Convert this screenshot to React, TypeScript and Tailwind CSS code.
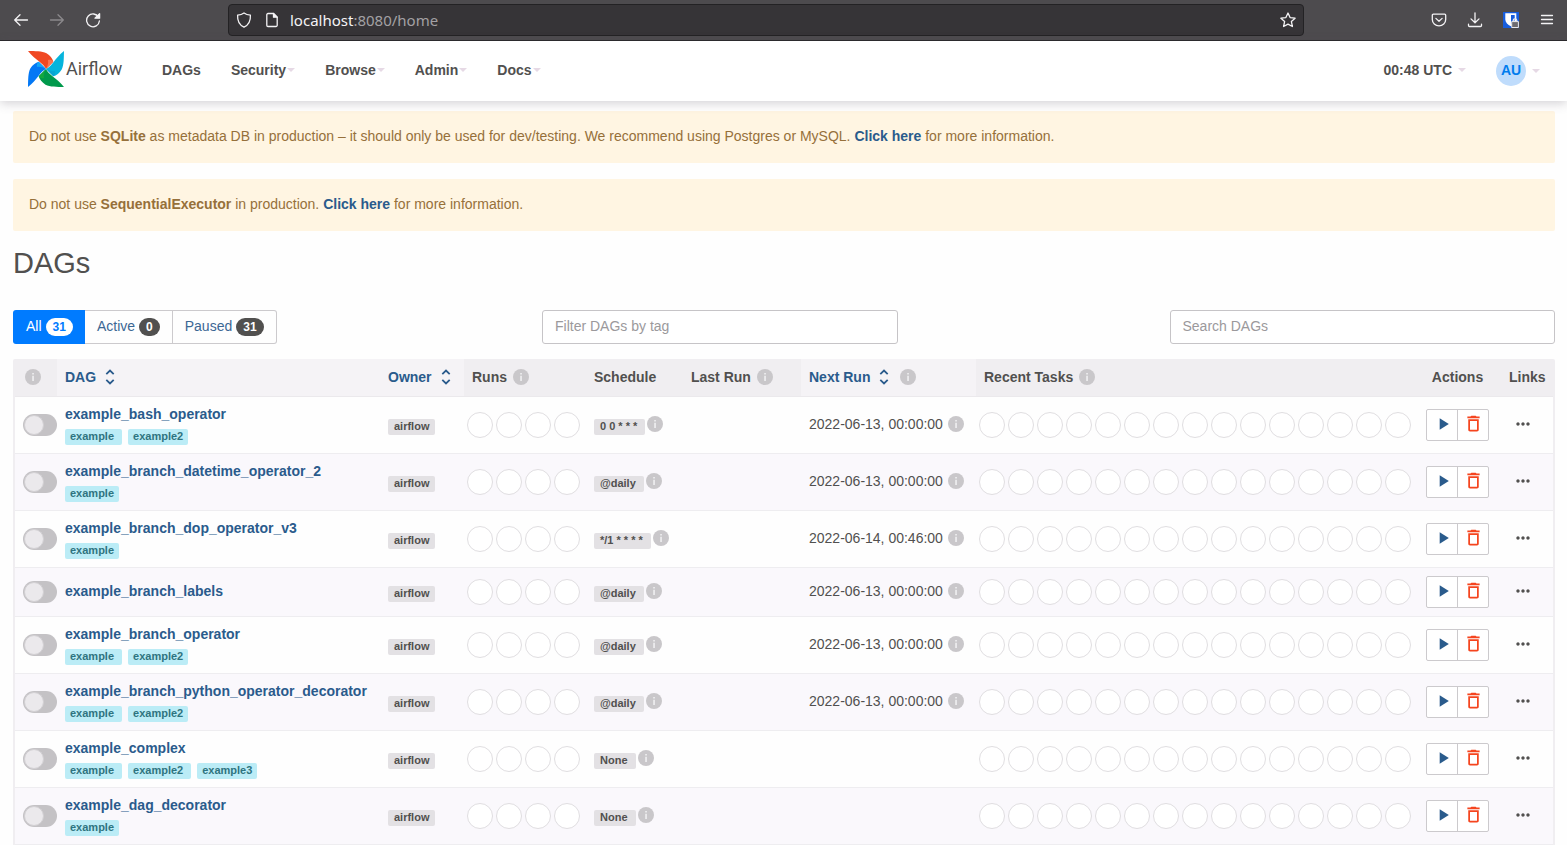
import type { ReactNode } from "react";
import { MdDeleteOutline, MdMoreHoriz, MdPlayArrow } from "react-icons/md";

type Dag = {
  id: string;
  tags: string[];
  schedule: string;
  nextRun?: string;
};

const dags: Dag[] = [
  {
    id: "example_bash_operator",
    tags: ["example", "example2"],
    schedule: "0 0 * * *",
    nextRun: "2022-06-13, 00:00:00",
  },
  {
    id: "example_branch_datetime_operator_2",
    tags: ["example"],
    schedule: "@daily",
    nextRun: "2022-06-13, 00:00:00",
  },
  {
    id: "example_branch_dop_operator_v3",
    tags: ["example"],
    schedule: "*/1 * * * *",
    nextRun: "2022-06-14, 00:46:00",
  },
  {
    id: "example_branch_labels",
    tags: [],
    schedule: "@daily",
    nextRun: "2022-06-13, 00:00:00",
  },
  {
    id: "example_branch_operator",
    tags: ["example", "example2"],
    schedule: "@daily",
    nextRun: "2022-06-13, 00:00:00",
  },
  {
    id: "example_branch_python_operator_decorator",
    tags: ["example", "example2"],
    schedule: "@daily",
    nextRun: "2022-06-13, 00:00:00",
  },
  {
    id: "example_complex",
    tags: ["example", "example2", "example3"],
    schedule: "None",
  },
  {
    id: "example_dag_decorator",
    tags: ["example"],
    schedule: "None",
  },
];

function ToolIcon({ children }: { children: ReactNode }) {
  return (
    <svg
      className="size-4"
      viewBox="0 0 16 16"
      fill="none"
      stroke="currentColor"
      strokeWidth="1.3"
      strokeLinecap="round"
      strokeLinejoin="round"
    >
      {children}
    </svg>
  );
}

function BrowserBar() {
  return (
    <div className="flex h-[41px] items-center border-b border-[#29282a] bg-[#4d4b4e] text-[#f4f3f5]">
      <div className="flex w-[228px] shrink-0 items-center gap-5 pl-[13px]">
        <button aria-label="Back">
          <ToolIcon>
            <path d="M14.5 8H1.7M7 2.7 1.7 8 7 13.3" />
          </ToolIcon>
        </button>
        <button aria-label="Forward" className="text-[#8b898c]">
          <ToolIcon>
            <path d="M1.5 8h12.8M9 2.7 14.3 8 9 13.3" />
          </ToolIcon>
        </button>
        <button aria-label="Reload">
          <ToolIcon>
            <path d="M13.6 5.2A6.4 6.4 0 1 0 14.4 9" />
            <path d="M14.6 1.6v4.6h-4.6z" fill="currentColor" />
          </ToolIcon>
        </button>
      </div>
      <div className="flex h-8 flex-1 items-center rounded-sm border border-[#232224] bg-[#363437] px-[7px]">
        <ToolIcon>
          <path d="M8 .9c2 1.5 4 2 6.4 2.2.3 5.4-1.5 9.8-6.4 12C3.100 12.900 1.300 8.500 1.600 3.100 4 2.900 6 2.400 8 .9z" />
        </ToolIcon>
        <span className="ml-3">
          <ToolIcon>
            <path d="M9.500 1.500H4A1.200 1.200 0 0 0 2.800 2.700v10.600A1.200 1.200 0 0 0 4 14.500h8a1.200 1.200 0 0 0 1.200-1.200V5.200z" />
            <path d="M9.500 1.500v3.700h3.700z" fill="currentColor" />
          </ToolIcon>
        </span>
        <span className="ml-[10px] flex-1 font-['Noto_Sans',sans-serif] text-[15px] leading-5 text-[#a3a1a4]">
          <span className="text-[#f4f3f5]">localhost</span>:8080/home
        </span>
        <button aria-label="Bookmark this page">
          <ToolIcon>
            <path d="m8 1 2.100 4.600 5 .6-3.700 3.400 1 4.900L8 12.100l-4.400 2.400 1-4.900L.9 6.200l5-.6z" />
          </ToolIcon>
        </button>
      </div>
      <div className="flex w-[263px] shrink-0 items-center justify-end gap-5 pr-3">
        <button aria-label="Save to Pocket">
          <ToolIcon>
            <path d="M2.300 2.200h11.400a1 1 0 0 1 1 1V7.500a6.700 6.300 0 0 1-13.400 0V3.200a1 1 0 0 1 1-1z" />
            <path d="M4.900 6.400 8 9.300l3.100-2.900" />
          </ToolIcon>
        </button>
        <button aria-label="Downloads">
          <ToolIcon>
            <path d="M8 .8v9.800M4 6.900l4 3.900 4-3.900M1.500 12.200v1.300a1 1 0 0 0 1 1h11a1 1 0 0 0 1-1v-1.300" />
          </ToolIcon>
        </button>
        <button aria-label="Password manager">
          <svg className="size-4" viewBox="0 0 16 16">
            <path d="M0 0h16v16H0z" fill="#175ddc" />
            <path
              d="M2.300 1.300h11v6.200c0 3-2.600 5.200-5.500 6.800-2.900-1.600-5.500-3.800-5.500-6.800z"
              fill="#fff"
            />
            <path d="M8 3h3.700v4.700c0 1.700-1.700 3.200-3.700 4.300z" fill="#175ddc" />
            <path
              d="M10.200 10V8.600a1.800 1.800 0 0 1 3.600 0V10"
              fill="none"
              stroke="#e9e8ea"
              strokeWidth="1.300"
            />
            <path d="M8.700 9.600h6.700v5.900H8.700z" fill="#6d6b6e" stroke="#e9e8ea" />
          </svg>
        </button>
        <button aria-label="Open menu">
          <ToolIcon>
            <path d="M2.500 3.500h11M2.500 7.500h11M2.500 11.500h11" />
          </ToolIcon>
        </button>
      </div>
    </div>
  );
}

function Pinwheel() {
  return (
    <svg className="size-9" viewBox="0 0 36 36">
      <path d="M0 0C7 .2 14 0 18.500 2.300 22 4.500 24.500 7.500 25.300 10.700L18 18C15.500 12 7.500 9.500 0 0z" fill="#f04822" />
      <path d="M20 9c2-.5 4-.3 5.300 1.700L18 18c1.800-3 2.500-6 2-9z" fill="#fb7552" />
      <path d="M36 0c-.2 7 0 14-2.300 18.500-2.200 3.500-5.200 6-8.400 6.800L18 18C24 15.500 26.500 7.500 36 0z" fill="#06b4dc" />
      <path d="M27 20c.5 2 .3 4-1.700 5.300L18 18c3 1.800 6 2.500 9 2z" fill="#0aa6d2" />
      <path d="M36 36c-7-.2-14 0-18.500-2.300-3.500-2.200-6-5.200-6.800-8.400L18 18C20.500 24 28.500 26.500 36 36z" fill="#00994b" />
      <path d="M16 27c-2 .5-4 .3-5.300-1.700L18 18c-1.800 3-2.500 6-2 9z" fill="#12a83f" />
      <path d="M0 36c.2-7 0-14 2.300-18.500 2.200-3.500 5.200-6 8.400-6.800L18 18C12 20.500 9.500 28.500 0 36z" fill="#0378f5" />
      <path d="M9 16c-.5-2-.3-4 1.700-5.300L18 18c-3-1.800-6-2.500-9-2z" fill="#12a6f7" />
    </svg>
  );
}

function Caret() {
  return (
    <span className="inline-block border-x-4 border-t-4 border-x-transparent border-t-[#e6d9e5]" />
  );
}

function NavItem({ label }: { label: string }) {
  return (
    <button className="flex items-center gap-px px-[15px]">
      {label}
      <Caret />
    </button>
  );
}

function Navbar() {
  return (
    <nav className="relative flex h-[60px] items-center bg-white pr-[27px] pl-7 text-sm leading-5 font-bold shadow-[0_2px_10px_rgba(80,75,90,0.26)]">
      <a href="#home" className="flex items-center gap-[2px] pb-1">
        <Pinwheel />
        <span className="w-[69px] font-['Roboto',sans-serif] text-[18px] font-normal">
          Airflow
        </span>
      </a>
      <div className="ml-3 flex flex-1 pb-[2px]">
        <a href="#dags" className="px-[15px]">
          DAGs
        </a>
        <NavItem label="Security" />
        <NavItem label="Browse" />
        <NavItem label="Admin" />
        <NavItem label="Docs" />
      </div>
      <button className="flex items-center gap-[6px] pb-[2px]">
        00:48 UTC
        <Caret />
      </button>
      <button className="ml-[30px] flex items-center gap-[6px]">
        <span className="flex size-[30px] items-center justify-center rounded-full bg-[#bfdcfc] pb-[2px] text-[#017cee]">
          AU
        </span>
        <Caret />
      </button>
    </nav>
  );
}

function Alert({ children }: { children: ReactNode }) {
  return (
    <div className="mb-4 rounded-xs bg-[#fff5e2] px-4 pt-[15px] pb-[17px] leading-5 text-[#96703a]">
      {children}
    </div>
  );
}

function DocLink() {
  return (
    <a href="#docs" className="font-bold text-[#2a5b8c]">
      Click here
    </a>
  );
}

function Info() {
  return (
    <svg className="size-4 shrink-0" viewBox="0 0 16 16">
      <circle cx="8" cy="8" r="8" fill="#c9c7ca" />
      <path d="M7.300 4h1.500v1.600H7.300zM7.300 6.800h1.500V12H7.300z" fill="#f3f2f4" />
    </svg>
  );
}

function SortIcon() {
  return (
    <svg
      className="h-4 w-[10px]"
      viewBox="0 0 10 16"
      fill="none"
      stroke="#2a5b8c"
      strokeWidth="1.800"
    >
      <path d="M1.300 5.200 5 1.600l3.700 3.600M1.300 10.800 5 14.400l3.700-3.600" />
    </svg>
  );
}

function SortHead({ label, info }: { label: string; info?: boolean }) {
  return (
    <th className="bg-[#f5f3f6] px-2">
      <div className="flex items-center">
        <a href="#sort" className="flex items-center gap-[9px] text-[#2a5b8c]">
          {label}
          <SortIcon />
        </a>
        {info && (
          <span className="ml-[11px]">
            <Info />
          </span>
        )}
      </div>
    </th>
  );
}

function Head({ label, info }: { label: string; info?: boolean }) {
  return (
    <th className="px-2">
      <div className="flex items-center gap-[6px]">
        {label}
        {info && <Info />}
      </div>
    </th>
  );
}

function Circles({ count }: { count: number }) {
  return (
    <div className="flex gap-[3px]">
      {Array.from({ length: count }).map((_, i) => (
        <span
          key={i}
          className="size-[26px] shrink-0 rounded-full border border-[#e0dee1] bg-white"
        />
      ))}
    </div>
  );
}

function DagRow({ dag }: { dag: Dag }) {
  return (
    <tr className="border-b border-[#eeedf0] even:bg-[#faf8fc]">
      <td className="pl-2">
        <label className="relative block h-[22px] w-[34px]">
          <input
            type="checkbox"
            aria-label={`Unpause ${dag.id}`}
            className="peer block h-[22px] w-[34px] appearance-none rounded-full bg-[#c4c2c5] checked:bg-[#017cee]"
          />
          <span className="absolute top-px left-px size-5 rounded-full border border-[#d2d0d3] bg-[#ebe9ec] peer-checked:left-[13px]" />
        </label>
      </td>
      <td className="px-2 pt-[7px] pb-2">
        <a href="#dag" className="block leading-5 font-bold text-[#2a5b8c]">
          {dag.id}
        </a>
        {dag.tags.length > 0 && (
          <div className="mt-[5px] flex gap-[6px]">
            {dag.tags.map((tag) => (
              <a
                key={tag}
                href="#tag"
                className="h-4 rounded-xs bg-[#bbecf6] pr-2 pl-[5px] text-[11px] leading-[14px] font-bold text-[#2f7480] last:pr-[5px]"
              >
                {tag}
              </a>
            ))}
          </div>
        )}
      </td>
      <td className="px-2">
        <a
          href="#owner"
          className="mt-1 block h-4 w-fit rounded-xs bg-[#e3e1e4] px-[6px] text-[11px] leading-[14px] font-bold"
        >
          airflow
        </a>
      </td>
      <td className="pl-[3px]">
        <Circles count={4} />
      </td>
      <td className="px-2">
        <div className="flex gap-[2px] pt-px">
          <a
            href="#schedule"
            className="mt-[3px] h-4 rounded-xs bg-[#e3e1e4] pr-2 pl-[6px] text-[11px] leading-[14px] font-bold"
          >
            {dag.schedule}
          </a>
          <Info />
        </div>
      </td>
      <td />
      <td className="px-2">
        {dag.nextRun && (
          <div className="flex items-center gap-[5px] pb-px">
            <time>{dag.nextRun}</time>
            <Info />
          </div>
        )}
      </td>
      <td className="pl-[3px]">
        <Circles count={15} />
      </td>
      <td className="px-2 py-2">
        <div className="flex h-8 w-[63px] rounded-xs border border-[#cccacd] bg-white">
          <button
            aria-label="Trigger DAG"
            className="flex w-[30px] items-center justify-center pb-[2px] pl-[2px] text-[#2a5b8c]"
          >
            <MdPlayArrow size={20} />
          </button>
          <button
            aria-label="Delete DAG"
            className="flex flex-1 items-center justify-center border-l border-[#cccacd] pb-[2px] text-[#f5451f]"
          >
            <MdDeleteOutline size={21} />
          </button>
        </div>
      </td>
      <td className="px-3">
        <button
          aria-label="Links"
          className="flex w-7 items-center justify-center pb-[2px]"
        >
          <MdMoreHoriz size={20} />
        </button>
      </td>
    </tr>
  );
}

export default function App() {
  return (
    <div className="bg-[#fefefe] font-['Liberation_Sans',Arial,sans-serif] text-sm leading-5 text-[#51504f]">
      <BrowserBar />
      <Navbar />

      <main className="px-[13px] pt-[10px] pr-3">
        <Alert>
          Do not use <b>SQLite</b> as metadata DB in production – it should only
          be used for dev/testing. We recommend using Postgres or MySQL.{" "}
          <DocLink /> for more information.
        </Alert>
        <Alert>
          Do not use <b>SequentialExecutor</b> in production. <DocLink /> for
          more information.
        </Alert>

        <h2 className="text-[29px] leading-8">DAGs</h2>

        {/* Filters */}
        <div className="mt-[31px] grid grid-cols-12">
          <div className="col-span-4 flex">
            <a
              href="#all"
              className="flex h-[34px] items-center gap-1 rounded-l-[3px] bg-[#007bff] pr-3 pl-[13px] text-white"
            >
              <span className="pb-[2px]">All</span>
              <span className="rounded-full bg-white px-[7px] text-xs leading-[18px] font-bold text-[#007bff]">
                31
              </span>
            </a>
            <a
              href="#active"
              className="flex h-[34px] items-center gap-1 border-y border-r border-[#cccacd] px-3 text-[#3c6794]"
            >
              <span className="pb-[2px]">Active</span>
              <span className="rounded-full bg-[#51504f] px-[7px] text-xs leading-[18px] font-bold text-white">
                0
              </span>
            </a>
            <a
              href="#paused"
              className="flex h-[34px] items-center gap-1 rounded-r-[3px] border-y border-r border-[#cccacd] px-3 text-[#3c6794]"
            >
              <span className="pb-[2px]">Paused</span>
              <span className="rounded-full bg-[#51504f] px-[7px] text-xs leading-[18px] font-bold text-white">
                31
              </span>
            </a>
          </div>
          <div className="col-span-3 px-[15px]">
            <input
              aria-label="Filter DAGs by tag"
              placeholder="Filter DAGs by tag"
              className="block h-[34px] w-full rounded-[3px] border border-[#c6c4c7] bg-white px-3 pb-[2px] placeholder:text-[#9b999c]"
            />
          </div>
          <div className="col-span-3 col-start-10">
            <input
              aria-label="Search DAGs"
              placeholder="Search DAGs"
              className="block h-[34px] w-full rounded-[3px] border border-[#c6c4c7] bg-white px-3 pb-[2px] placeholder:text-[#9b999c]"
            />
          </div>
        </div>

        {/* DAG list */}
        <div className="mt-[15px] overflow-hidden rounded-t-xs border-x-2 border-[#f0eef1]">
          <table className="w-full table-fixed border-collapse text-left">
            <colgroup>
              <col className="w-[42px]" />
              <col />
              <col className="w-[84px]" />
              <col className="w-[122px]" />
              <col className="w-[97px]" />
              <col className="w-[118px]" />
              <col className="w-[175px]" />
              <col className="w-[442px]" />
              <col className="w-[79px]" />
              <col className="w-[56px]" />
            </colgroup>
            <thead>
              <tr className="h-[37px] border-b border-[#ebe9ec] bg-[#f0eef1]">
                <th className="pl-[10px]">
                  <Info />
                </th>
                <SortHead label="DAG" />
                <SortHead label="Owner" />
                <Head label="Runs" info />
                <Head label="Schedule" />
                <Head label="Last Run" info />
                <SortHead label="Next Run" info />
                <Head label="Recent Tasks" info />
                <th className="text-center">Actions</th>
                <th className="pl-3">Links</th>
              </tr>
            </thead>
            <tbody>
              {dags.map((dag) => (
                <DagRow key={dag.id} dag={dag} />
              ))}
            </tbody>
          </table>
        </div>
      </main>
    </div>
  );
}
